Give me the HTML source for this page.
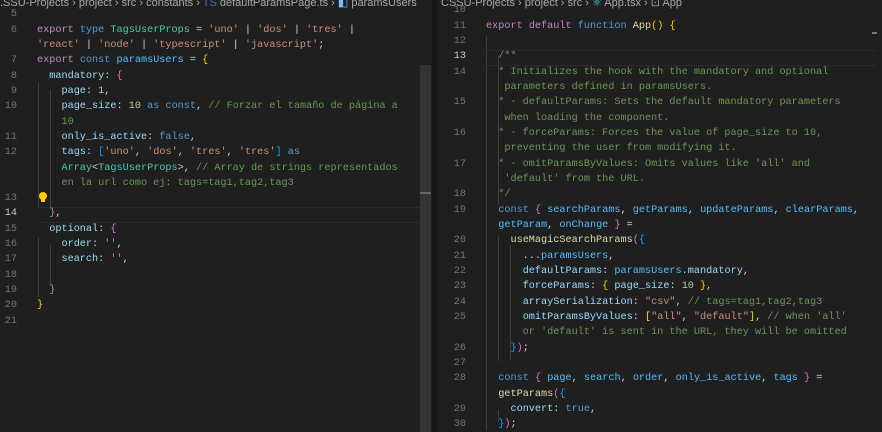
<!DOCTYPE html><html><head><meta charset="utf-8"><style>
body{margin:0;width:882px;height:432px;background:#1f1f1f;overflow:hidden;font-family:"Liberation Mono",monospace;font-size:10.2px;position:relative}
.bc{position:absolute;top:-4px;height:12px;font-family:"Liberation Sans",sans-serif;font-size:11px;color:#a9a9a9;white-space:nowrap}
.l{position:absolute;white-space:pre;color:#d4d4d4;line-height:15px;height:15px}
.n{position:absolute;width:20px;text-align:right;color:#6e7681;white-space:pre;line-height:15px}
.k{color:#c586c0}.b{color:#569cd6}.t{color:#4ec9b0}.s{color:#ce9178}.c{color:#6a9955}.v{color:#9cdcfe}.num{color:#b5cea8}.f{color:#dcdcaa}.y{color:#ffd700}.p{color:#da70d6}.bl{color:#179fff}.w{color:#d4d4d4}.co{color:#4fc1ff}
.g{position:absolute;width:1px;background:#404040}
</style></head><body>
<div class="bc" style="left:0">.SSU-Projects › project › src › constants › <span style="color:#3178c6">TS</span> defaultParamsPage.ts › <span style="color:#75beff">◧</span> paramsUsers</div>
<div class="bc" style="left:441px">CSSU-Projects › project › src › <span style="color:#61dafb">⚛</span> App.tsx › <span>⊡</span> App</div>
<div style="position:absolute;left:432px;top:0;width:6px;height:432px;background:#181818"></div>
<div style="position:absolute;left:420px;top:65px;width:11px;height:367px;background:#333"></div>
<div style="position:absolute;left:420px;top:192px;width:11px;height:2px;background:#666"></div>
<div style="position:absolute;left:37px;top:207px;width:383px;height:14px;border-top:1px solid #2a2a2a;border-bottom:1px solid #2a2a2a"></div>
<div style="position:absolute;left:486px;top:50px;width:390px;height:14px;border-top:1px solid #2a2a2a;border-bottom:1px solid #2a2a2a"></div>
<div style="position:absolute;left:872px;top:32px;width:5px;height:2px;background:#777"></div>
<div class="g" style="left:38px;top:83px;height:124px"></div>
<div class="g" style="left:50px;top:90px;height:117px"></div>
<div class="g" style="left:38px;top:237px;height:60px"></div>
<div class="g" style="left:50px;top:245px;height:40px"></div>
<div class="g" style="left:486px;top:36px;height:395px"></div>
<div class="g" style="left:498px;top:55px;height:150px"></div>
<div class="g" style="left:498px;top:236px;height:125px"></div>
<div class="g" style="left:510px;top:245px;height:115px"></div>
<div class="g" style="left:498px;top:410px;height:12px"></div>
<div style="position:absolute;left:39px;top:192px;width:8px;height:8px;border-radius:50%;background:#ffcc00"></div>
<div style="position:absolute;left:41px;top:199px;width:4px;height:3px;background:#ffcc00"></div>

<div class="n" style="left:-3px;top:7px">5</div>
<div class="n" style="left:-3px;top:23px">6</div>
<div class="l" style="left:37px;top:23px"><span class="k">export</span> <span class="b">type</span> <span class="t">TagsUserProps</span> = <span class="s">'uno'</span> | <span class="s">'dos'</span> | <span class="s">'tres'</span> |</div>
<div class="l" style="left:37px;top:38px"><span class="s">'react'</span> | <span class="s">'node'</span> | <span class="s">'typescript'</span> | <span class="s">'javascript'</span>;</div>
<div class="n" style="left:-3px;top:53px">7</div>
<div class="l" style="left:37px;top:53px"><span class="k">export</span> <span class="b">const</span> <span class="co">paramsUsers</span> = <span class="y">{</span></div>
<div class="n" style="left:-3px;top:69px">8</div>
<div class="l" style="left:37px;top:69px">  <span class="v">mandatory</span>: <span class="p">{</span></div>
<div class="n" style="left:-3px;top:84px">9</div>
<div class="l" style="left:37px;top:84px">    <span class="v">page</span>: <span class="num">1</span>,</div>
<div class="n" style="left:-3px;top:99px">10</div>
<div class="l" style="left:37px;top:99px">    <span class="v">page_size</span>: <span class="num">10</span> <span class="b">as</span> <span class="b">const</span>, <span class="c">// Forzar el tamaño de página a</span></div>
<div class="l" style="left:37px;top:115px">    <span class="c">10</span></div>
<div class="n" style="left:-3px;top:130px">11</div>
<div class="l" style="left:37px;top:130px">    <span class="v">only_is_active</span>: <span class="b">false</span>,</div>
<div class="n" style="left:-3px;top:145px">12</div>
<div class="l" style="left:37px;top:145px">    <span class="v">tags</span>: <span class="bl">[</span><span class="s">'uno'</span>, <span class="s">'dos'</span>, <span class="s">'tres'</span>, <span class="s">'tres'</span><span class="bl">]</span> <span class="b">as</span></div>
<div class="l" style="left:37px;top:161px">    <span class="t">Array</span>&lt;<span class="t">TagsUserProps</span>&gt;, <span class="c">// Array de strings representados</span></div>
<div class="l" style="left:37px;top:176px">    <span class="c">en la url como ej: tags=tag1,tag2,tag3</span></div>
<div class="n" style="left:-3px;top:191px">13</div>
<div class="n" style="left:-3px;top:206px;color:#ccc">14</div>
<div class="l" style="left:37px;top:206px">  <span class="p">}</span>,</div>
<div class="n" style="left:-3px;top:222px">15</div>
<div class="l" style="left:37px;top:222px">  <span class="v">optional</span>: <span class="p">{</span></div>
<div class="n" style="left:-3px;top:237px">16</div>
<div class="l" style="left:37px;top:237px">    <span class="v">order</span>: <span class="s">''</span>,</div>
<div class="n" style="left:-3px;top:252px">17</div>
<div class="l" style="left:37px;top:252px">    <span class="v">search</span>: <span class="s">''</span>,</div>
<div class="n" style="left:-3px;top:268px">18</div>
<div class="n" style="left:-3px;top:283px">19</div>
<div class="l" style="left:37px;top:283px">  <span class="p">}</span></div>
<div class="n" style="left:-3px;top:298px">20</div>
<div class="l" style="left:37px;top:298px"><span class="y">}</span></div>
<div class="n" style="left:-3px;top:314px">21</div>

<div class="n" style="left:446px;top:3px">10</div>
<div class="n" style="left:446px;top:19px">11</div>
<div class="l" style="left:486px;top:19px"><span class="k">export</span> <span class="k">default</span> <span class="b">function</span> <span class="f">App</span><span class="y">()</span> <span class="y">{</span></div>
<div class="n" style="left:446px;top:34px">12</div>
<div class="n" style="left:446px;top:49px;color:#ccc">13</div>
<div class="l c" style="left:486px;top:49px">  /**</div>
<div class="n" style="left:446px;top:65px">14</div>
<div class="l c" style="left:486px;top:65px">  * Initializes the hook with the mandatory and optional</div>
<div class="l c" style="left:486px;top:80px">   parameters defined in paramsUsers.</div>
<div class="n" style="left:446px;top:95px">15</div>
<div class="l c" style="left:486px;top:95px">  * - defaultParams: Sets the default mandatory parameters</div>
<div class="l c" style="left:486px;top:111px">   when loading the component.</div>
<div class="n" style="left:446px;top:126px">16</div>
<div class="l c" style="left:486px;top:126px">  * - forceParams: Forces the value of page_size to 10,</div>
<div class="l c" style="left:486px;top:141px">   preventing the user from modifying it.</div>
<div class="n" style="left:446px;top:157px">17</div>
<div class="l c" style="left:486px;top:157px">  * - omitParamsByValues: Omits values like 'all' and</div>
<div class="l c" style="left:486px;top:172px">   'default' from the URL.</div>
<div class="n" style="left:446px;top:187px">18</div>
<div class="l c" style="left:486px;top:187px">  */</div>
<div class="n" style="left:446px;top:203px">19</div>
<div class="l" style="left:486px;top:203px">  <span class="b">const</span> <span class="p">{</span> <span class="co">searchParams</span>, <span class="co">getParams</span>, <span class="co">updateParams</span>, <span class="co">clearParams</span>,</div>
<div class="l" style="left:486px;top:218px">  <span class="co">getParam</span>, <span class="co">onChange</span> <span class="p">}</span> =</div>
<div class="n" style="left:446px;top:233px">20</div>
<div class="l" style="left:486px;top:233px">    <span class="f">useMagicSearchParams</span><span class="p">(</span><span class="bl">{</span></div>
<div class="n" style="left:446px;top:249px">21</div>
<div class="l" style="left:486px;top:249px">      ...<span class="co">paramsUsers</span>,</div>
<div class="n" style="left:446px;top:264px">22</div>
<div class="l" style="left:486px;top:264px">      <span class="v">defaultParams</span>: <span class="co">paramsUsers</span>.<span class="v">mandatory</span>,</div>
<div class="n" style="left:446px;top:279px">23</div>
<div class="l" style="left:486px;top:279px">      <span class="v">forceParams</span>: <span class="y">{</span> <span class="v">page_size</span>: <span class="num">10</span> <span class="y">}</span>,</div>
<div class="n" style="left:446px;top:295px">24</div>
<div class="l" style="left:486px;top:295px">      <span class="v">arraySerialization</span>: <span class="s">"csv"</span>, <span class="c">// tags=tag1,tag2,tag3</span></div>
<div class="n" style="left:446px;top:310px">25</div>
<div class="l" style="left:486px;top:310px">      <span class="v">omitParamsByValues</span>: <span class="y">[</span><span class="s">"all"</span>, <span class="s">"default"</span><span class="y">]</span>, <span class="c">// when 'all'</span></div>
<div class="l c" style="left:486px;top:325px">      or 'default' is sent in the URL, they will be omitted</div>
<div class="n" style="left:446px;top:341px">26</div>
<div class="l" style="left:486px;top:341px">    <span class="bl">}</span><span class="p">)</span>;</div>
<div class="n" style="left:446px;top:356px">27</div>
<div class="n" style="left:446px;top:371px">28</div>
<div class="l" style="left:486px;top:371px">  <span class="b">const</span> <span class="p">{</span> <span class="co">page</span>, <span class="co">search</span>, <span class="co">order</span>, <span class="co">only_is_active</span>, <span class="co">tags</span> <span class="p">}</span> =</div>
<div class="l" style="left:486px;top:387px">  <span class="f">getParams</span><span class="p">(</span><span class="bl">{</span></div>
<div class="n" style="left:446px;top:402px">29</div>
<div class="l" style="left:486px;top:402px">    <span class="v">convert</span>: <span class="b">true</span>,</div>
<div class="n" style="left:446px;top:417px">30</div>
<div class="l" style="left:486px;top:417px">  <span class="bl">}</span><span class="p">)</span>;</div>
</body></html>
